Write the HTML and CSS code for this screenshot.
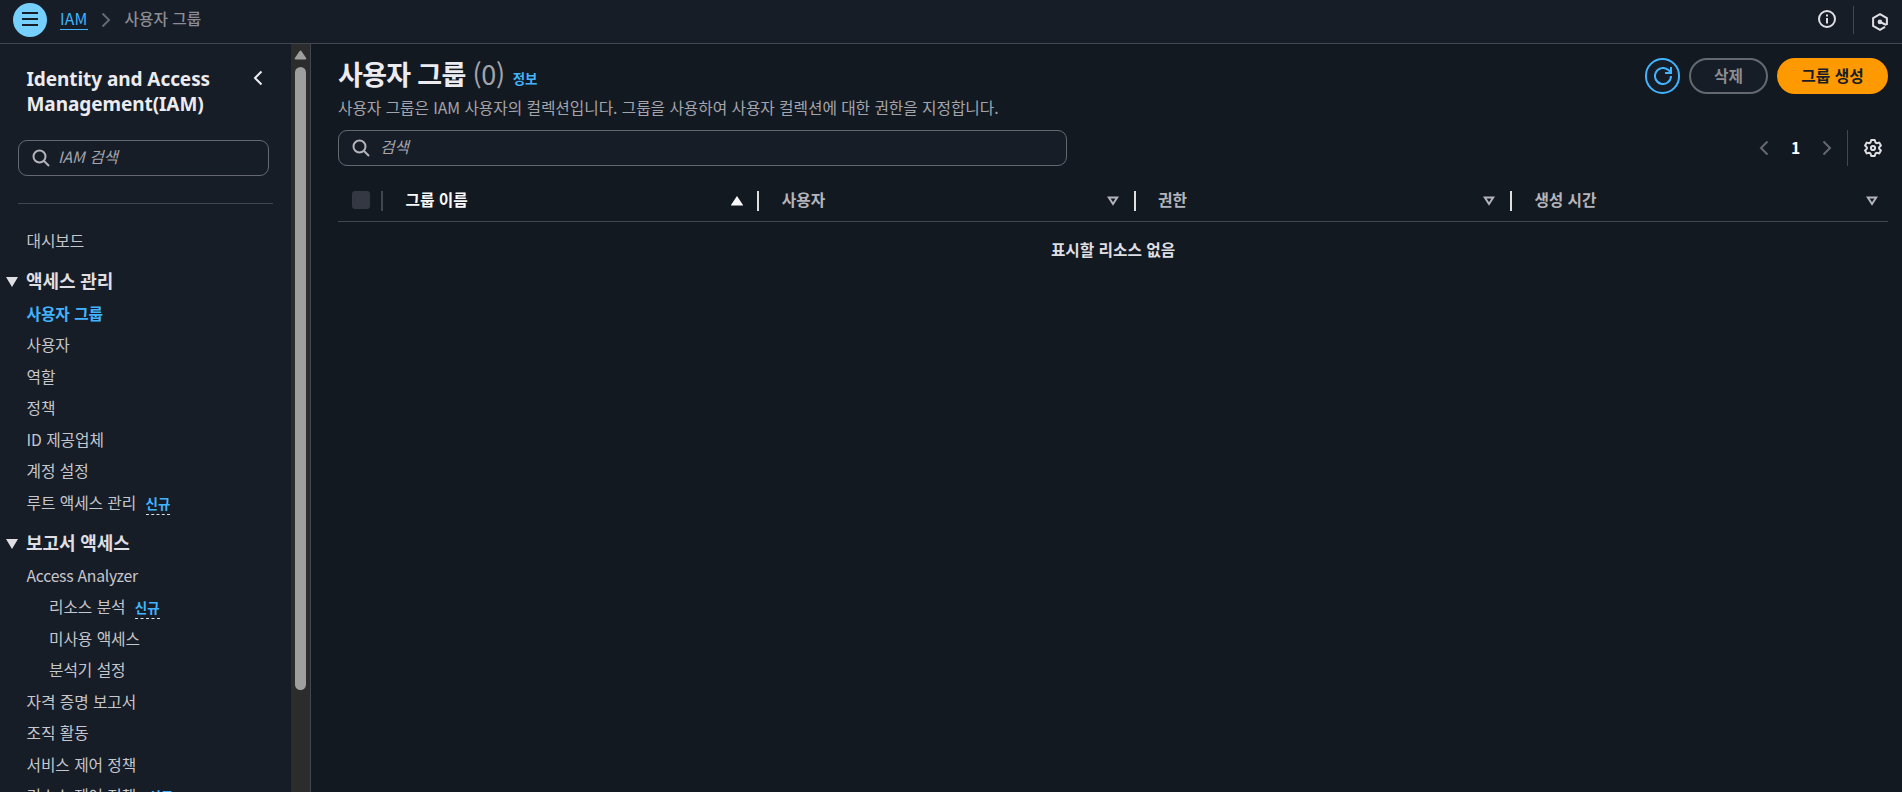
FILE: index.html
```html
<!DOCTYPE html>
<html lang="ko">
<head>
    <meta charset="UTF-8">
    <meta name="viewport" content="width=device-width, initial-scale=1.0">
    <title>사용자 그룹 | IAM</title>
    <link rel="stylesheet" href="styles.css">
</head>
<body>

<header class="topbar">
    <button class="menu-btn">
        <svg width="16" height="14" viewBox="0 0 16 14"><path d="M0 1h16M0 7h16M0 13h16"/></svg>
    </button>
    <nav class="breadcrumb">
        <a href="#">IAM</a>
        <svg class="crumb-arrow" width="10" height="16" viewBox="0 0 10 16"><path d="M1.5 1.5L8 8l-6.5 6.5"/></svg>
        <span>사용자 그룹</span>
    </nav>
    <div class="topbar-tools">
        <svg width="18" height="18" viewBox="0 0 18 18"><circle cx="9" cy="9" r="8"/><path d="M9 8v5.5M9 4.500v2"/></svg>
        <span class="tools-line"></span>
        <svg class="hex" width="16" height="18" viewBox="0 0 16 18"><path d="M14.900 12V5.100L8 1.200 1.100 5.100v7.800L8 16.800l5-2.900"/><path d="M8 9l6.500 3" stroke-width="2.200"/><circle cx="7.900" cy="8.900" r="2.300" fill="currentColor" stroke="none"/></svg>
    </div>
</header>

<div class="layout">
    <aside class="sidebar">
        <div class="side-content">
            <div class="side-header">
                <h2>Identity and Access Management(IAM)</h2>
                <svg width="10" height="16" viewBox="0 0 10 16"><path d="M8.500 1.500L2 8l6.500 6.500"/></svg>
            </div>
            <div class="search">
                <svg width="18" height="18" viewBox="0 0 18 18"><circle cx="7.500" cy="7.500" r="6"/><path d="M12 12l5 5"/></svg>
                <span>IAM 검색</span>
            </div>
            <hr>
            <ul class="menu">
                <li>대시보드</li>
                <li class="section"><span class="caret"></span>액세스 관리</li>
                <li class="active">사용자 그룹</li>
                <li>사용자</li>
                <li>역할</li>
                <li>정책</li>
                <li>ID 제공업체</li>
                <li>계정 설정</li>
                <li>루트 액세스 관리 <span class="new">신규</span></li>
                <li class="section"><span class="caret"></span>보고서 액세스</li>
                <li class="latin">Access Analyzer</li>
                <li class="sub">리소스 분석 <span class="new">신규</span></li>
                <li class="sub">미사용 액세스</li>
                <li class="sub">분석기 설정</li>
                <li>자격 증명 보고서</li>
                <li>조직 활동</li>
                <li>서비스 제어 정책</li>
                <li class="last">리소스 제어 정책 <span class="new">신규</span></li>
            </ul>
        </div>
        <div class="scrollbar">
            <svg width="13" height="10" viewBox="0 0 13 10"><path d="M6.500 1.500l4.800 7H1.700z" fill="#9f9f9f" stroke="#9f9f9f" stroke-width="2" stroke-linejoin="round"/></svg>
            <div class="thumb"></div>
        </div>
    </aside>

    <main class="content">
        <div class="content-header">
            <div>
                <h1>사용자 그룹 <span class="count">(0)</span> <a href="#" class="info">정보</a></h1>
                <p>사용자 그룹은 IAM 사용자의 컬렉션입니다. 그룹을 사용하여 사용자 컬렉션에 대한 권한을 지정합니다.</p>
            </div>
            <div class="actions">
                <button class="btn refresh">
                    <svg width="18" height="18" viewBox="0 0 18 18"><path d="M17 9a8 8 0 1 1-2.600-5.900L17 5.500M17 0v6h-6"/></svg>
                </button>
                <button class="btn delete">삭제</button>
                <button class="btn create">그룹 생성</button>
            </div>
        </div>

        <div class="filters">
            <div class="search">
                <svg width="18" height="18" viewBox="0 0 18 18"><circle cx="7.500" cy="7.500" r="6"/><path d="M12 12l5 5"/></svg>
                <span>검색</span>
            </div>
            <div class="pagination">
                <svg width="10" height="16" viewBox="0 0 10 16"><path d="M8.500 1.500L2 8l6.500 6.500"/></svg>
                <b>1</b>
                <svg width="10" height="16" viewBox="0 0 10 16"><path d="M1.500 1.500L8 8l-6.500 6.500"/></svg>
                <span class="page-line"></span>
                <svg class="gear" width="18" height="18" viewBox="0 0 18 18"><path d="M7.300 1h3.400l.9 2.600 1 .6 2.600-.6 1.700 2.900L15.100 8.400v1.200l1.800 1.900-1.700 2.900-2.600-.6-1 .6-.9 2.600H7.300l-.9-2.600-1-.6-2.600.6-1.700-2.900 1.800-1.900V8.400L1.100 6.500l1.700-2.900 2.600.6 1-.6z"/><circle cx="9" cy="9" r="2.100"/></svg>
            </div>
        </div>

        <div class="table-head">
            <div class="th check"><span class="checkbox"></span></div>
            <div class="th sorted">그룹 이름 <svg width="12" height="10" viewBox="0 0 12 10"><path d="M6 1.800l4.400 6.700H1.600z"/></svg></div>
            <div class="th">사용자 <svg width="12" height="10" viewBox="0 0 12 10"><path d="M1.800 1.500h8.400L6 8z"/></svg></div>
            <div class="th">권한 <svg width="12" height="10" viewBox="0 0 12 10"><path d="M1.800 1.500h8.400L6 8z"/></svg></div>
            <div class="th">생성 시간 <svg width="12" height="10" viewBox="0 0 12 10"><path d="M1.800 1.500h8.400L6 8z"/></svg></div>
        </div>
        <div class="empty">표시할 리소스 없음</div>
    </main>
</div>

</body>
</html>
```
FILE: styles.css
```css
* {
    box-sizing: border-box;
}
body {
    margin: 0;
    height: 100vh;
    overflow: hidden;
    display: flex;
    flex-direction: column;
    background-color: #131920;
    color: #c6c6cd;
    font-family: "Noto Sans CJK KR", sans-serif;
    font-size: 15.75px;
    line-height: 22.5px;
    letter-spacing: -0.06px;
}
svg {
    display: block;
    flex: none;
    fill: none;
    stroke: currentColor;
    stroke-width: 2;
}
a {
    color: #42b4ff;
    text-decoration: none;
}
button {
    font-family: inherit;
    padding: 0;
}
.topbar {
    flex: none;
    height: 44px;
    display: flex;
    align-items: flex-start;
    background-color: #161d26;
    border-bottom: 1px solid #424650;
    padding-left: 13px;
}
.menu-btn {
    width: 34px;
    height: 34px;
    margin-top: 3px;
    padding-bottom: 2px;
    border: none;
    border-radius: 50%;
    background-color: #75cfff;
    color: #161d26;
    display: flex;
    align-items: center;
    justify-content: center;
}
.breadcrumb {
    display: flex;
    align-items: center;
    height: 39px;
    margin-left: 13px;
    color: #8c8c94;
    font-weight: 500;
}
.breadcrumb a {
    font-weight: 400;
    border-bottom: 1px solid #42b4ff;
    line-height: 20px;
    letter-spacing: 0.2px;
}
.crumb-arrow {
    margin: 1px 14px 0 13px;
    color: #656871;
}
.topbar-tools {
    display: flex;
    margin-left: auto;
    padding: 6px 14px 0 0;
    color: #dedee3;
}
.topbar-tools svg {
    margin-top: 4px;
}
.topbar-tools .hex {
    margin-top: 7px;
}
.tools-line {
    width: 1px;
    height: 28px;
    margin: 0 18px 0 17px;
    background-color: #424650;
}
.layout {
    flex: 1;
    min-height: 0;
    display: flex;
}
.sidebar {
    width: 311px;
    flex: none;
    display: flex;
    background-color: #161d26;
    border-right: 1px solid #424650;
}
.side-content {
    flex: 1;
    overflow: hidden;
}
.side-header {
    display: flex;
    justify-content: space-between;
    padding: 23px 28px 0 26.5px;
    color: #ebebf0;
}
.side-header h2 {
    width: 200px;
    margin: 0;
    font-family: "Noto Sans", sans-serif;
    font-size: 19px;
    line-height: 25px;
    letter-spacing: -0.07px;
}
.side-header svg {
    margin-top: 3px;
}
.search {
    display: flex;
    align-items: center;
    height: 36px;
    padding-left: 13px;
    border: 1px solid #656871;
    border-radius: 9px;
    background-color: #161d26;
    color: #a4a4ad;
    font-style: italic;
}
.search svg {
    color: #b4b4bb;
    margin-right: 10px;
}
.search span {
    margin-top: -1px;
}
.side-content .search {
    width: 251px;
    margin: 23px 0 0 18px;
}
.side-content .search svg {
    margin-right: 8px;
}
hr {
    width: 255px;
    margin: 27px 0 20.6px 18px;
    border: none;
    border-top: 1px solid #424650;
}
.menu {
    list-style: none;
    margin: 0;
    padding: 0;
}
.menu li {
    height: 31.5px;
    line-height: 31.5px;
    padding-left: 26.5px;
    white-space: nowrap;
}
.menu .section {
    display: flex;
    align-items: center;
    height: 41.5px;
    padding: 7px 0 0 6px;
    color: #dedee3;
    font-size: 18px;
    font-weight: 700;
    letter-spacing: -0.1px;
}
.caret {
    margin: 3px 8px 0 0;
    border: 6px solid transparent;
    border-top: 10px solid #dedee3;
    border-bottom: none;
}
.menu .active {
    color: #42b4ff;
    font-weight: 700;
}
.menu .latin {
    letter-spacing: -0.25px;
}
.menu .sub {
    padding-left: 49px;
}
.new {
    display: inline-block;
    margin-left: 5px;
    line-height: 21px;
    color: #42b4ff;
    font-size: 13.5px;
    font-weight: 700;
    border-bottom: 1px dashed #dedee3;
}
.last .new {
    margin-left: 8px;
}
.scrollbar {
    width: 19px;
    padding: 6px 0 0 4px;
    background-color: #2c2c2c;
}
.scrollbar svg {
    margin-left: -1px;
}
.thumb {
    width: 11px;
    height: 623px;
    margin-top: 7px;
    border-radius: 6px;
    background-color: #9f9f9f;
}
.content {
    flex: 1;
    min-width: 0;
    padding: 14px 14px 0 27px;
}
.content-header {
    display: flex;
    justify-content: space-between;
    height: 72px;
}
h1 {
    margin: -1px 0 0;
    color: #ebebf0;
    font-size: 27px;
    line-height: 34px;
    letter-spacing: -0.7px;
}
.count {
    color: #a4a4ad;
    font-weight: 400;
    letter-spacing: -0.3px;
}
.info {
    position: relative;
    top: -1px;
    margin-left: 1px;
    font-size: 13.5px;
    letter-spacing: 0;
}
p {
    margin: 1px 0 0;
    color: #a4a4ad;
}
.actions {
    display: flex;
    gap: 9px;
}
.btn {
    height: 36px;
    padding-bottom: 2px;
    border: 2px solid #656871;
    border-radius: 18px;
    background-color: #161d26;
    font-size: 15.75px;
    font-weight: 700;
}
.refresh {
    width: 35px;
    padding: 0 0 0 7px;
    border-color: #42b4ff;
    color: #42b4ff;
}
.delete {
    width: 79px;
    color: #8c8c94;
}
.create {
    width: 111px;
    border-color: #ff9900;
    background-color: #ff9900;
    color: #161d26;
}
.filters {
    display: flex;
    justify-content: space-between;
}
.filters .search {
    width: 729px;
}
.pagination {
    display: flex;
    align-items: center;
    padding-right: 6px;
    color: #656871;
}
.pagination b {
    width: 9px;
    margin: 0 22px;
    color: #fff;
}
.page-line {
    width: 1px;
    height: 36px;
    margin: 0 16px 0 15px;
    background-color: #424650;
}
.gear {
    color: #dedee3;
    stroke-linejoin: round;
}
.table-head {
    display: flex;
    height: 56px;
    padding-top: 13px;
    border-bottom: 1px solid #424650;
}
.th {
    position: relative;
    flex: 1 1 25%;
    display: flex;
    align-items: center;
    justify-content: space-between;
    padding: 0 16.5px 0 22.5px;
    color: #b4b4bb;
    font-weight: 700;
}
.th svg {
    margin-top: 1px;
}
.th:not(:last-child)::after {
    content: "";
    position: absolute;
    right: 0;
    top: 12px;
    width: 2px;
    height: 20px;
    background-color: #dedee3;
}
.th:last-child {
    padding-right: 10px;
}
.th.check {
    flex: none;
    width: 45px;
    padding: 0 0 0 14px;
}
.th.check::after {
    background-color: #424650;
}
.sorted {
    color: #f9f9fa;
}
.sorted svg {
    fill: currentColor;
}
.checkbox {
    width: 18px;
    height: 18px;
    border-radius: 3px;
    background-color: #333843;
}
.empty {
    padding-top: 17px;
    text-align: center;
    color: #dedee3;
    font-weight: 700;
}
```
